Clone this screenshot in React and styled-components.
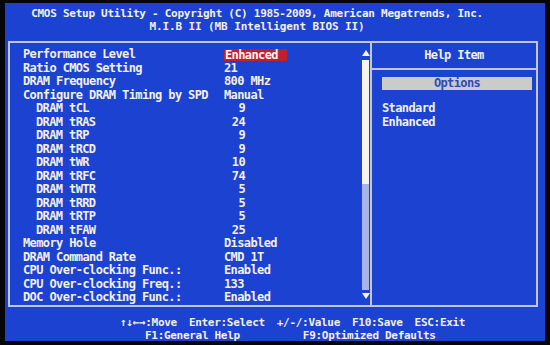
import React from 'react';
import styled, { createGlobalStyle } from 'styled-components';

const Global = createGlobalStyle`
  html, body { margin: 0; padding: 0; background: #060606; }
  body { width: 550px; height: 345px; overflow: hidden; }
`;

const Screen = styled.div`
  box-sizing: border-box;
  margin: 3px 0 0 5px;
  width: 540px;
  height: 338px;
  background: #1c42d2;
  color: #f3f0e4;
  font-family: "DejaVu Sans Mono", "Liberation Mono", monospace;
  font-weight: bold;
  font-size: 12px;
  letter-spacing: -0.62px;
  display: flex;
  flex-direction: column;
`;

const Header = styled.header`
  padding: 4px 36px 0 0;
  text-align: center;
  font-size: 11px;
  line-height: 13px;
  white-space: pre;
`;

const HeaderLine = styled.div`
  letter-spacing: ${p => (p.$tight ? '-0.26px' : '-0.1px')};
`;

const Frame = styled.main`
  box-sizing: border-box;
  margin: 8px 0 0 3px;
  width: 530px;
  height: 266px;
  border: 2px solid #c3c6d8;
  display: grid;
  grid-template-columns: 362px 1fr;
`;

const LeftPanel = styled.section`
  display: grid;
  grid-template-columns: 352px 7px;
  border-right: 2px solid #c3c6d8;
`;

const List = styled.div`
  padding-top: 5px;
  display: flex;
  flex-direction: column;
`;

const Row = styled.div`
  display: grid;
  grid-template-columns: ${p => (p.$sub ? '188px' : '201px')} auto;
  padding-left: ${p => (p.$sub ? '26px' : '13px')};
  height: 13.5px;
  line-height: 13.5px;
  white-space: pre;
`;

const Value = styled.span`
  justify-self: start;
  box-sizing: border-box;
  ${p => p.$selected && `
    background: #c41f2c;
    color: #fff4ee;
    width: 63px;
    padding-left: 1px;
    line-height: 12px;
    height: 12px;
    margin-top: 1px;
  `}
  ${p => p.$num && `
    width: 21px;
    text-align: right;
  `}
`;

const Scroll = styled.div`
  display: flex;
  flex-direction: column;
  align-items: center;
  padding-top: 7px;
  padding-bottom: 6px;
`;

const Arrow = styled.svg`
  display: block;
  width: 8px;
  height: 6px;
  flex: none;
`;

const Thumb = styled.div`
  width: 7px;
  height: 124px;
  margin-top: 4px;
  background: #f4f4f0;
`;

const Track = styled.div`
  width: 7px;
  flex: 1;
  margin-bottom: 3px;
  background: #a6b4e6;
`;

const RightPanel = styled.aside`
  display: flex;
  flex-direction: column;
`;

const HelpTitle = styled.div`
  height: 25px;
  line-height: 25px;
  text-align: center;
  border-bottom: 2px solid #c3c6d8;
`;

const OptionsBox = styled.div`
  margin: 7px 4px 0 10px;
  height: 13px;
  line-height: 13px;
  background: #c9ccc8;
  color: #2c48c4;
  text-align: center;
`;

const HelpList = styled.div`
  margin: 12px 0 0 10px;
  line-height: 13.5px;
`;

const Footer = styled.footer`
  margin-top: 9px;
  display: flex;
  flex-direction: column;
  font-size: 11px;
  line-height: 13px;
  white-space: pre;
  letter-spacing: -0.3px;
`;

const FooterLine = styled.div`
  display: flex;
  gap: ${p => p.$gap}px;
  padding-left: ${p => p.$indent}px;
`;

const rows = [
  { label: 'Performance Level', value: 'Enhanced', selected: true },
  { label: 'Ratio CMOS Setting', value: '21' },
  { label: 'DRAM Frequency', value: '800 MHz' },
  { label: 'Configure DRAM Timing by SPD', value: 'Manual' },
  { label: 'DRAM tCL', value: '9', sub: true },
  { label: 'DRAM tRAS', value: '24', sub: true },
  { label: 'DRAM tRP', value: '9', sub: true },
  { label: 'DRAM tRCD', value: '9', sub: true },
  { label: 'DRAM tWR', value: '10', sub: true },
  { label: 'DRAM tRFC', value: '74', sub: true },
  { label: 'DRAM tWTR', value: '5', sub: true },
  { label: 'DRAM tRRD', value: '5', sub: true },
  { label: 'DRAM tRTP', value: '5', sub: true },
  { label: 'DRAM tFAW', value: '25', sub: true },
  { label: 'Memory Hole', value: 'Disabled' },
  { label: 'DRAM Command Rate', value: 'CMD 1T' },
  { label: 'CPU Over-clocking Func.:', value: 'Enabled' },
  { label: 'CPU Over-clocking Freq.:', value: '133' },
  { label: 'DOC Over-clocking Func.:', value: 'Enabled' },
];

export default function App() {
  return (
    <>
      <Global />
      <Screen>
        <Header>
          <HeaderLine $tight>CMOS Setup Utility - Copyright (C) 1985-2009, American Megatrends, Inc.</HeaderLine>
          <HeaderLine>M.I.B II (MB Intelligent BIOS II)</HeaderLine>
        </Header>
        <Frame>
          <LeftPanel>
            <List>
              {rows.map(r => (
                <Row key={r.label} $sub={r.sub}>
                  <span>{r.label}</span>
                  <Value $selected={r.selected} $num={r.sub}>{r.value}</Value>
                </Row>
              ))}
            </List>
            <Scroll>
              <Arrow viewBox="0 0 8 6"><polygon points="4,0 8,6 0,6" fill="#f4f4f0" /></Arrow>
              <Thumb />
              <Track />
              <Arrow viewBox="0 0 8 6"><polygon points="0,0 8,0 4,6" fill="#f4f4f0" /></Arrow>
            </Scroll>
          </LeftPanel>
          <RightPanel>
            <HelpTitle>Help Item</HelpTitle>
            <OptionsBox>Options</OptionsBox>
            <HelpList>
              <div>Standard</div>
              <div>Enhanced</div>
            </HelpList>
          </RightPanel>
        </Frame>
        <Footer>
          <FooterLine $indent={115} $gap={12}>
            <span>↑↓←→:Move</span>
            <span>Enter:Select</span>
            <span>+/-/:Value</span>
            <span>F10:Save</span>
            <span>ESC:Exit</span>
          </FooterLine>
          <FooterLine $indent={140} $gap={63}>
            <span>F1:General Help</span>
            <span>F9:Optimized Defaults</span>
          </FooterLine>
        </Footer>
      </Screen>
    </>
  );
}
